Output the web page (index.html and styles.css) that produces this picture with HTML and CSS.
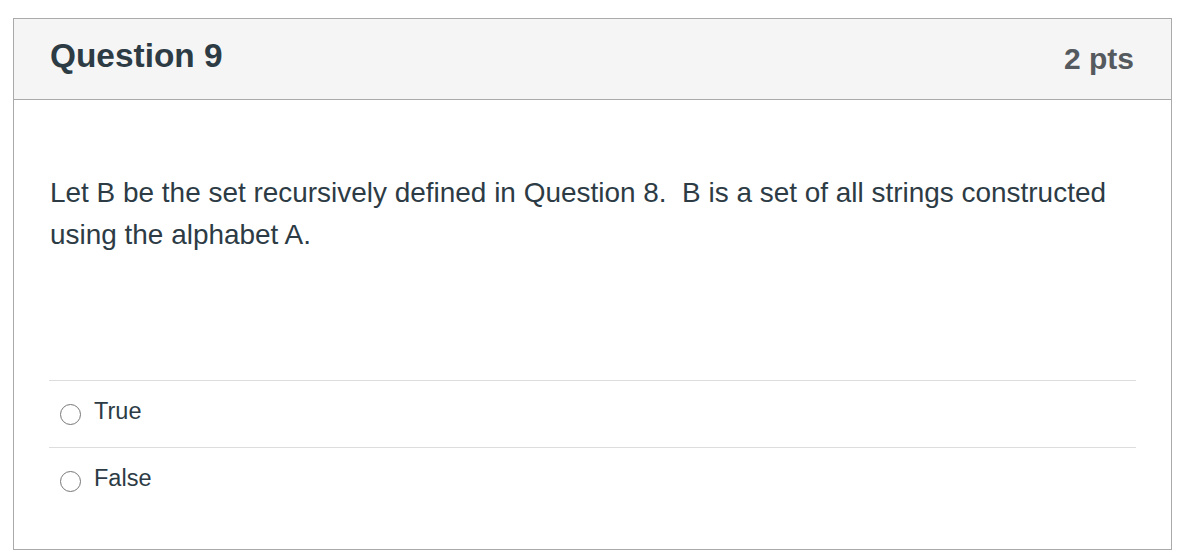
FILE: index.html
```html
<!DOCTYPE html>
<html>
<head>
<meta charset="utf-8">
<link rel="stylesheet" href="styles.css">
</head>
<body>
<div class="card">
  <div class="header">
    <h2 class="title">Question 9</h2>
    <div class="pts">2 pts</div>
  </div>
  <div class="content">
    <p class="text">Let B be the set recursively defined in Question 8.&nbsp; B is a set of all strings constructed using the alphabet A.</p>
    <div class="answers">
      <label class="answer"><span class="radio"></span><span class="label">True</span></label>
      <label class="answer"><span class="radio"></span><span class="label">False</span></label>
    </div>
  </div>
</div>
</body>
</html>
```
FILE: styles.css
```css
html, body {
  margin: 0;
  padding: 0;
  background: #fff;
  font-family: "Liberation Sans", Arial, sans-serif;
  color: #2d3b45;
}
.card {
  margin: 18px 0 0 13px;
  width: 1157px;
  height: 530px;
  border: 1px solid #aaaaaa;
  box-sizing: content-box;
  display: flex;
  flex-direction: column;
}
.header {
  background: #f5f5f5;
  border-bottom: 1px solid #aaaaaa;
  height: 80px;
  display: flex;
  justify-content: space-between;
  align-items: center;
  padding: 0 37px 0 36px;
}
.title {
  margin: 0;
  font-size: 33.4px;
  font-weight: bold;
  color: #2d3b45;
  position: relative;
  top: -3px;
}
.pts {
  font-size: 30px;
  font-weight: bold;
  color: #555a5e;
}
.content {
  padding: 0 35px 0 35px;
  flex: 1;
}
.text {
  margin: 72px 0 0 1px;
  font-size: 27.95px;
  line-height: 42px;
}
.answers {
  margin-top: 124px;
}
.answer {
  display: flex;
  align-items: center;
  height: 66px;
  border-top: 1px solid #dddddd;
  padding-left: 11px;
}
.radio {
  border: 1.5px solid #777;
  border-radius: 50%;
  box-sizing: border-box;
  width: 21px;
  height: 21px;
}
.label {
  margin: -5px 0 0 13px;
  font-size: 23.5px;
  color: #2d3b45;
}
```
